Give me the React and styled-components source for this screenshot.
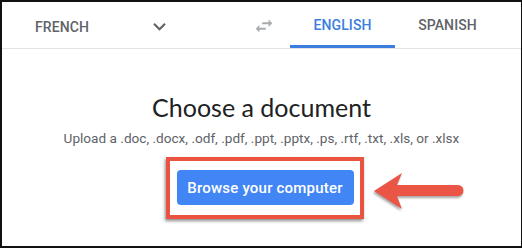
import React from 'react'
import styled, { createGlobalStyle } from 'styled-components'

const GlobalStyle = createGlobalStyle`
  html, body {
    margin: 0;
    padding: 0;
    background: #ffffff;
  }
  * {
    box-sizing: border-box;
  }`

const Frame = styled.div`
  width: 522px;
  height: 248px;
  border: 2px solid #111;
  border-right-width: 1px;
  background: #ffffff;
  display: flex;
  flex-direction: column;
  font-family: Roboto, "Liberation Sans", sans-serif;
  overflow: hidden;`

const Header = styled.header`
  height: 47px;
  display: flex;
  align-items: stretch;
  border-bottom: 1px solid #e2e3e5;`

const SourceBox = styled.div`
  width: 170px;
  padding-left: 33px;
  padding-top: 3px;
  display: flex;
  align-items: center;
  justify-content: space-between;`

const SwapBox = styled.div`
  width: 118px;
  padding-left: 81px;
  padding-top: 2px;
  display: flex;
  align-items: center;`

const Label = styled.span`
  font-size: 14px;
  font-weight: 500;
  letter-spacing: 0.1px;
  color: ${p => (p.$active ? '#3b7ee0' : '#606368')};`

const Tab = styled.div`
  width: 105px;
  padding-top: 3px;
  display: flex;
  align-items: center;
  justify-content: center;
  border-bottom: 3px solid ${p => (p.$active ? '#3b7ee0' : 'transparent')};`

const Body = styled.main`
  flex: 1;
  display: flex;
  flex-direction: column;
  align-items: center;`

const Title = styled.h1`
  margin: 43px 0 0;
  font-family: Lato, "Open Sans", sans-serif;
  font-weight: 400;
  font-size: 25px;
  line-height: 31px;
  color: #202124;`

const Hint = styled.p`
  margin: 6px 0 0;
  font-size: 13.6px;
  line-height: 18px;
  color: #5f6368;`

const Callout = styled.div`
  position: relative;
  margin-top: 10px;
  margin-left: 6px;
  padding: 9px 6px 10px 7px;
  border: 4px solid #e9533f;
  box-shadow: -1px 2px 3px rgba(0, 0, 0, 0.45);`

const BrowseButton = styled.button`
  width: 177px;
  height: 35px;
  border: none;
  border-radius: 4px;
  background: #4285f4;
  color: #ffffff;
  font-family: Roboto, "Liberation Sans", sans-serif;
  font-size: 15px;
  font-weight: 500;
  letter-spacing: 0.2px;
  cursor: pointer;`

const Pointer = styled.svg`
  position: absolute;
  left: calc(100% + 13px);
  top: 10px;
  filter: drop-shadow(-1px 2px 1px rgba(0, 0, 0, 0.35));`

const ChevronIcon = () => (
    <svg width="25" height="25" viewBox="0 0 24 24" fill="#5f6368">
        <path d="M16.59 8.59L12 13.17 7.41 8.59 6 10l6 6 6-6z"/>
    </svg>
)

const SwapIcon = () => (
    <svg width="22" height="22" viewBox="0 0 24 24" fill="#a8abaf">
        <path d="M6.99 11L3 15l3.99 4v-3H14v-2H6.99v-3zM21 9l-3.99-4v3H10v2h7.01v3L21 9z"/>
    </svg>
)

const targets = ["ENGLISH", "SPANISH"]

const App = () => {
    return (
        <>
            <GlobalStyle/>
            <Frame>
                <Header>
                    <SourceBox>
                        <Label>FRENCH</Label>
                        <ChevronIcon/>
                    </SourceBox>
                    <SwapBox>
                        <SwapIcon/>
                    </SwapBox>
                    {targets.map((t, i) =>
                        <Tab key={t} $active={i === 0}>
                            <Label $active={i === 0}>{t}</Label>
                        </Tab>
                    )}
                </Header>
                <Body>
                    <Title>Choose a document</Title>
                    <Hint>Upload a .doc, .docx, .odf, .pdf, .ppt, .pptx, .ps, .rtf, .txt, .xls, or .xlsx</Hint>
                    <Callout>
                        <BrowseButton>Browse your computer</BrowseButton>
                        <Pointer width="92" height="40" viewBox="0 0 92 40">
                            <path d="M1 20 L29 2 L24 14 L85 14 A5.5 5.5 0 0 1 85 25 L24 25 L29 38 Z" fill="#ea5545"/>
                        </Pointer>
                    </Callout>
                </Body>
            </Frame>
        </>
    );
};

export default App;
